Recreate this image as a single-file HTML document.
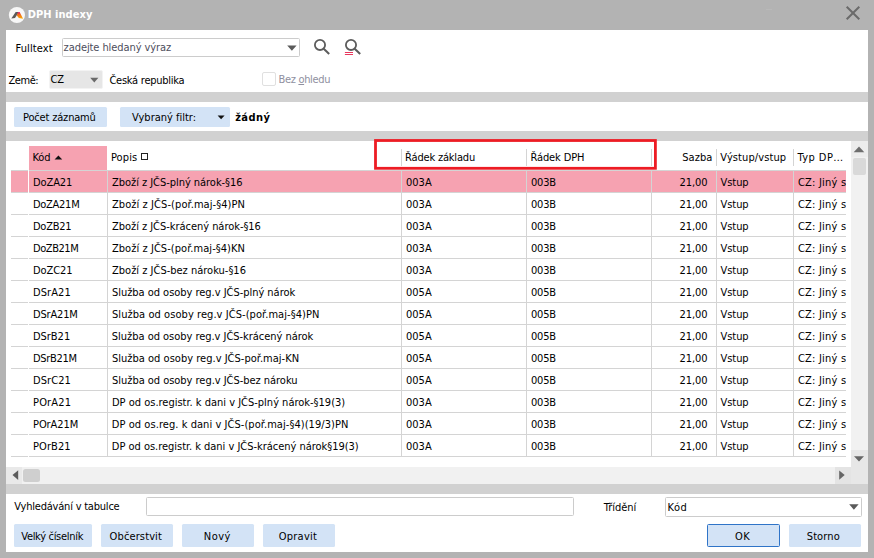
<!DOCTYPE html><html lang="cs"><head><meta charset="utf-8"><title>DPH indexy</title><style>
html,body{margin:0;padding:0}
body{width:874px;height:558px;overflow:hidden;background:#b3b3b3;position:relative;font-family:"DejaVu Sans Condensed", "Liberation Sans", sans-serif;font-size:11px;color:#000}
div,span,svg{position:absolute;box-sizing:border-box}
.t{white-space:nowrap;line-height:14px;height:14px}
.t u{position:static}
.b{font-weight:bold}
.w{color:#fff}
.ph{color:#4d4d5c}
.dis{color:#8f90a0}
.panel{left:6px;top:30px;width:862px;height:522px;background:#fff}
.sep{left:6px;width:862px;background:#d1d1d1}
.btn{background:#d3e3f6;border-radius:1.5px}
.inp{background:#fff;border:1px solid #cccccc;border-radius:1.5px}
.pink{background:#f6a2b1}
.hl{background:#d4d4d4;height:1px}
.vl{background:#d4d4d4;width:1px}
.clip{overflow:hidden}
</style></head><body>
<svg style="left:8px;top:6px" width="18" height="18" viewBox="0 0 18 18"><defs><linearGradient id="g" x1="0" y1="0" x2="0" y2="1"><stop offset="0" stop-color="#e5007d"/><stop offset="0.35" stop-color="#f0641e"/><stop offset="1" stop-color="#f9b000"/></linearGradient></defs><circle cx="8.9" cy="9" r="8.1" fill="#f7f7f7"/><path d="M3.3 12.5 L7.7 6.1 L10.9 6.1 L7 12 Z" fill="#5a5a5a"/><path d="M10 6.2 L11.6 5.9 L15.1 12.7 L10.8 12 L8.7 9.3 Z" fill="url(#g)"/></svg>
<span id="title" class="t b w" style="left:27.70px;top:7.50px;letter-spacing:0.050px">DPH indexy</span>
<svg style="left:844px;top:4px" width="18" height="18" viewBox="0 0 18 18"><path d="M2.7 2.7 L15.3 15.3 M15.3 2.7 L2.7 15.3" stroke="#6a6a6a" stroke-width="2" fill="none"/></svg>
<div class="panel"></div>
<div style="left:766px;top:9px;width:6px;height:1px;background:#b9b9b9"></div>
<span id="fulltext" class="t" style="left:15.50px;top:41.50px;letter-spacing:0.099px">Fulltext</span>
<div class="inp" style="left:62px;top:38px;width:238px;height:19px"></div>
<span id="ph" class="t ph" style="left:63.62px;top:40.50px;letter-spacing:-0.085px">zadejte hledaný výraz</span>
<svg style="left:287px;top:45px" width="11" height="7" viewBox="0 0 11 7"><path d="M0.2 0.4 L9.6 0.4 L4.9 5.8 Z" fill="#5a5a5a"/></svg>
<svg style="left:312px;top:37px" width="20" height="20" viewBox="0 0 20 20"><circle cx="8" cy="7.9" r="5.1" stroke="#5c5c5c" stroke-width="1.8" fill="none"/><path d="M11.7 11.7 L17.2 17" stroke="#5c5c5c" stroke-width="2" fill="none"/></svg>
<svg style="left:343px;top:37px" width="20" height="20" viewBox="0 0 20 20"><circle cx="8" cy="7.9" r="5.1" stroke="#5c5c5c" stroke-width="1.8" fill="none"/><path d="M11.7 11.7 L17.2 17" stroke="#5c5c5c" stroke-width="2" fill="none"/><path d="M1.9 15.5 H10 M1.9 17.5 H10" stroke="#e8365c" stroke-width="1.2" fill="none"/></svg>
<span id="zeme" class="t" style="left:8.52px;top:73.50px;letter-spacing:-0.438px">Země:</span>
<div style="left:49px;top:70px;width:54px;height:19px;background:#e6e6e6;border:1px solid #f3f3f3;border-radius:2px"></div>
<span id="cz" class="t" style="left:50.50px;top:72.50px;letter-spacing:-0.162px">CZ</span>
<svg style="left:89px;top:77px" width="11" height="7" viewBox="0 0 11 7"><path d="M1.2 0.8 L9.4 0.8 L5.3 5.6 Z" fill="#6a6a6a"/></svg>
<span id="ceska" class="t" style="left:109.43px;top:73.50px;letter-spacing:-0.252px">Česká republika</span>
<div style="left:262px;top:72px;width:14px;height:14px;border:1px solid #e0e0e0;border-radius:2px;background:#fff"></div>
<span id="bez" class="t dis" style="left:278.50px;top:72.50px;letter-spacing:-0.333px">Bez <u>o</u>hledu</span>
<div class="sep" style="top:92px;height:10px"></div>
<div class="btn" style="left:14px;top:107px;width:93px;height:20px"></div>
<span id="pocet" class="t" style="left:23.05px;top:110.50px;letter-spacing:-0.172px">Počet záznamů</span>
<div class="btn" style="left:120px;top:107px;width:110px;height:20px"></div>
<span id="vyb" class="t" style="left:132.06px;top:110.50px;letter-spacing:-0.009px">Vybraný filtr:</span>
<svg style="left:217px;top:115px" width="8" height="5" viewBox="0 0 8 5"><path d="M0.6 0.4 L7.6 0.4 L4.1 4.3 Z" fill="#111"/></svg>
<span id="zadny" class="t b" style="left:235.14px;top:110.50px;letter-spacing:0.450px">žádný</span>
<div class="sep" style="top:131px;height:10px"></div>
<div class="pink" style="left:29px;top:146px;width:78px;height:24px"></div>
<span id="h_kod" class="t" style="left:32.44px;top:150.50px;letter-spacing:-0.120px">Kód</span>
<svg style="left:54px;top:155px" width="9" height="5" viewBox="0 0 9 5"><path d="M0.6 4.6 L8.2 4.6 L4.4 0.4 Z" fill="#111"/></svg>
<span id="h_popis" class="t" style="left:110.88px;top:150.50px;letter-spacing:0.129px">Popis</span>
<div style="left:141px;top:153px;width:7px;height:7px;border:1px solid #222"></div>
<div class="vl" style="left:401px;top:149px;height:17px"></div>
<div class="vl" style="left:526px;top:149px;height:17px"></div>
<div class="vl" style="left:651px;top:149px;height:17px"></div>
<div class="vl" style="left:716px;top:149px;height:17px"></div>
<div class="vl" style="left:793px;top:149px;height:17px"></div>
<span id="h_rz" class="t" style="left:405.05px;top:150.50px;letter-spacing:-0.179px">Řádek základu</span>
<span id="h_rd" class="t" style="left:530.50px;top:150.50px;letter-spacing:-0.125px">Řádek DPH</span>
<span id="h_sazba" class="t" style="left:682.26px;top:150.50px;letter-spacing:0.068px">Sazba</span>
<span id="h_vv" class="t" style="left:720.37px;top:150.50px;letter-spacing:0.089px">Výstup/vstup</span>
<span id="h_typ" class="t" style="left:797.42px;top:150.50px;letter-spacing:0.450px">Typ DP…</span>
<div class="pink" style="left:11px;top:171px;width:17px;height:21px"></div>
<div class="pink" style="left:29px;top:171px;width:817px;height:21px"></div>
<div class="hl" style="left:11px;top:170px;width:835px"></div>
<div class="hl" style="left:11px;top:192px;width:835px"></div>
<div class="hl" style="left:11px;top:214px;width:835px"></div>
<div class="hl" style="left:11px;top:236px;width:835px"></div>
<div class="hl" style="left:11px;top:258px;width:835px"></div>
<div class="hl" style="left:11px;top:280px;width:835px"></div>
<div class="hl" style="left:11px;top:302px;width:835px"></div>
<div class="hl" style="left:11px;top:324px;width:835px"></div>
<div class="hl" style="left:11px;top:346px;width:835px"></div>
<div class="hl" style="left:11px;top:368px;width:835px"></div>
<div class="hl" style="left:11px;top:390px;width:835px"></div>
<div class="hl" style="left:11px;top:412px;width:835px"></div>
<div class="hl" style="left:11px;top:434px;width:835px"></div>
<div class="hl" style="left:11px;top:456px;width:835px"></div>
<div style="left:28px;top:170px;width:1px;height:287px;background:#fff"></div>
<div class="vl" style="left:107px;top:170px;height:287px"></div>
<div class="vl" style="left:401px;top:170px;height:287px"></div>
<div class="vl" style="left:526px;top:170px;height:287px"></div>
<div class="vl" style="left:651px;top:170px;height:287px"></div>
<div class="vl" style="left:716px;top:170px;height:287px"></div>
<div class="vl" style="left:793px;top:170px;height:287px"></div>
<div class="clip" style="left:0;top:0;width:846px;height:470px">
<span id="r0k" class="t" style="left:33.01px;top:175.50px;letter-spacing:-0.109px">DoZA21</span><span id="r0p" class="t" style="left:111.99px;top:175.50px;letter-spacing:-0.040px">Zboží z JČS-plný nárok-§16</span><span id="r0a" class="t" style="left:405.90px;top:175.50px;letter-spacing:0.065px">003A</span><span id="r0b" class="t" style="left:530.93px;top:175.50px;letter-spacing:-0.193px">003B</span><span id="r0s" class="t" style="left:679.57px;top:175.50px;letter-spacing:-0.097px">21,00</span><span id="r0v" class="t" style="left:720.59px;top:175.50px;letter-spacing:-0.079px">Vstup</span><span id="r0t" class="t" style="left:797.90px;top:175.50px;letter-spacing:0.222px">CZ: Jiný s</span>
<span id="r1k" class="t" style="left:33.02px;top:197.50px;letter-spacing:-0.283px">DoZA21M</span><span id="r1p" class="t" style="left:111.94px;top:197.50px;letter-spacing:0.078px">Zboží z JČS-(poř.maj-§4)PN</span><span id="r1a" class="t" style="left:405.90px;top:197.50px;letter-spacing:0.065px">003A</span><span id="r1b" class="t" style="left:530.93px;top:197.50px;letter-spacing:-0.193px">003B</span><span id="r1s" class="t" style="left:679.57px;top:197.50px;letter-spacing:-0.097px">21,00</span><span id="r1v" class="t" style="left:720.59px;top:197.50px;letter-spacing:-0.079px">Vstup</span><span id="r1t" class="t" style="left:797.90px;top:197.50px;letter-spacing:0.222px">CZ: Jiný s</span>
<span id="r2k" class="t" style="left:33.00px;top:219.50px;letter-spacing:-0.248px">DoZB21</span><span id="r2p" class="t" style="left:111.98px;top:219.50px;letter-spacing:-0.036px">Zboží z JČS-krácený nárok-§16</span><span id="r2a" class="t" style="left:405.90px;top:219.50px;letter-spacing:0.065px">003A</span><span id="r2b" class="t" style="left:530.93px;top:219.50px;letter-spacing:-0.193px">003B</span><span id="r2s" class="t" style="left:679.57px;top:219.50px;letter-spacing:-0.097px">21,00</span><span id="r2v" class="t" style="left:720.59px;top:219.50px;letter-spacing:-0.079px">Vstup</span><span id="r2t" class="t" style="left:797.90px;top:219.50px;letter-spacing:0.222px">CZ: Jiný s</span>
<span id="r3k" class="t" style="left:33.01px;top:241.50px;letter-spacing:-0.435px">DoZB21M</span><span id="r3p" class="t" style="left:111.93px;top:241.50px;letter-spacing:0.057px">Zboží z JČS-(poř.maj-§4)KN</span><span id="r3a" class="t" style="left:405.90px;top:241.50px;letter-spacing:0.065px">003A</span><span id="r3b" class="t" style="left:530.93px;top:241.50px;letter-spacing:-0.193px">003B</span><span id="r3s" class="t" style="left:679.57px;top:241.50px;letter-spacing:-0.097px">21,00</span><span id="r3v" class="t" style="left:720.59px;top:241.50px;letter-spacing:-0.079px">Vstup</span><span id="r3t" class="t" style="left:797.90px;top:241.50px;letter-spacing:0.222px">CZ: Jiný s</span>
<span id="r4k" class="t" style="left:33.01px;top:263.50px;letter-spacing:-0.106px">DoZC21</span><span id="r4p" class="t" style="left:112.02px;top:263.50px">Zboží z JČS-bez nároku-§16</span><span id="r4a" class="t" style="left:405.90px;top:263.50px;letter-spacing:0.065px">003A</span><span id="r4b" class="t" style="left:530.93px;top:263.50px;letter-spacing:-0.193px">003B</span><span id="r4s" class="t" style="left:679.57px;top:263.50px;letter-spacing:-0.097px">21,00</span><span id="r4v" class="t" style="left:720.59px;top:263.50px;letter-spacing:-0.079px">Vstup</span><span id="r4t" class="t" style="left:797.90px;top:263.50px;letter-spacing:0.222px">CZ: Jiný s</span>
<span id="r5k" class="t" style="left:33.02px;top:285.50px;letter-spacing:0.086px">DSrA21</span><span id="r5p" class="t" style="left:111.96px;top:285.50px;letter-spacing:-0.030px">Služba od osoby reg.v JČS-plný nárok</span><span id="r5a" class="t" style="left:405.92px;top:285.50px;letter-spacing:0.058px">005A</span><span id="r5b" class="t" style="left:530.93px;top:285.50px;letter-spacing:-0.193px">005B</span><span id="r5s" class="t" style="left:679.57px;top:285.50px;letter-spacing:-0.097px">21,00</span><span id="r5v" class="t" style="left:720.59px;top:285.50px;letter-spacing:-0.079px">Vstup</span><span id="r5t" class="t" style="left:797.90px;top:285.50px;letter-spacing:0.222px">CZ: Jiný s</span>
<span id="r6k" class="t" style="left:33.01px;top:307.50px;letter-spacing:-0.176px">DSrA21M</span><span id="r6p" class="t" style="left:112.00px;top:307.50px;letter-spacing:0.063px">Služba od osoby reg.v JČS-(poř.maj-§4)PN</span><span id="r6a" class="t" style="left:405.92px;top:307.50px;letter-spacing:0.058px">005A</span><span id="r6b" class="t" style="left:530.93px;top:307.50px;letter-spacing:-0.193px">005B</span><span id="r6s" class="t" style="left:679.57px;top:307.50px;letter-spacing:-0.097px">21,00</span><span id="r6v" class="t" style="left:720.59px;top:307.50px;letter-spacing:-0.079px">Vstup</span><span id="r6t" class="t" style="left:797.90px;top:307.50px;letter-spacing:0.222px">CZ: Jiný s</span>
<span id="r7k" class="t" style="left:33.01px;top:329.50px;letter-spacing:-0.036px">DSrB21</span><span id="r7p" class="t" style="left:111.85px;top:329.50px;letter-spacing:-0.030px">Služba od osoby reg.v JČS-krácený nárok</span><span id="r7a" class="t" style="left:405.92px;top:329.50px;letter-spacing:0.058px">005A</span><span id="r7b" class="t" style="left:530.93px;top:329.50px;letter-spacing:-0.193px">005B</span><span id="r7s" class="t" style="left:679.57px;top:329.50px;letter-spacing:-0.097px">21,00</span><span id="r7v" class="t" style="left:720.59px;top:329.50px;letter-spacing:-0.079px">Vstup</span><span id="r7t" class="t" style="left:797.90px;top:329.50px;letter-spacing:0.222px">CZ: Jiný s</span>
<span id="r8k" class="t" style="left:33.01px;top:351.50px;letter-spacing:-0.297px">DSrB21M</span><span id="r8p" class="t" style="left:111.92px;top:351.50px;letter-spacing:0.019px">Služba od osoby reg.v JČS-poř.maj-KN</span><span id="r8a" class="t" style="left:405.92px;top:351.50px;letter-spacing:0.058px">005A</span><span id="r8b" class="t" style="left:530.93px;top:351.50px;letter-spacing:-0.193px">005B</span><span id="r8s" class="t" style="left:679.57px;top:351.50px;letter-spacing:-0.097px">21,00</span><span id="r8v" class="t" style="left:720.59px;top:351.50px;letter-spacing:-0.079px">Vstup</span><span id="r8t" class="t" style="left:797.90px;top:351.50px;letter-spacing:0.222px">CZ: Jiný s</span>
<span id="r9k" class="t" style="left:33.02px;top:373.50px;letter-spacing:0.065px">DSrC21</span><span id="r9p" class="t" style="left:112.05px;top:373.50px;letter-spacing:-0.033px">Služba od osoby reg.v JČS-bez nároku</span><span id="r9a" class="t" style="left:405.92px;top:373.50px;letter-spacing:0.058px">005A</span><span id="r9b" class="t" style="left:530.93px;top:373.50px;letter-spacing:-0.193px">005B</span><span id="r9s" class="t" style="left:679.57px;top:373.50px;letter-spacing:-0.097px">21,00</span><span id="r9v" class="t" style="left:720.59px;top:373.50px;letter-spacing:-0.079px">Vstup</span><span id="r9t" class="t" style="left:797.90px;top:373.50px;letter-spacing:0.222px">CZ: Jiný s</span>
<span id="r10k" class="t" style="left:33.00px;top:395.50px;letter-spacing:0.166px">POrA21</span><span id="r10p" class="t" style="left:112.01px;top:395.50px;letter-spacing:-0.004px">DP od os.registr. k dani v JČS-plný nárok-§19(3)</span><span id="r10a" class="t" style="left:405.90px;top:395.50px;letter-spacing:0.065px">003A</span><span id="r10b" class="t" style="left:530.93px;top:395.50px;letter-spacing:-0.193px">003B</span><span id="r10s" class="t" style="left:679.57px;top:395.50px;letter-spacing:-0.097px">21,00</span><span id="r10v" class="t" style="left:720.59px;top:395.50px;letter-spacing:-0.079px">Vstup</span><span id="r10t" class="t" style="left:797.90px;top:395.50px;letter-spacing:0.222px">CZ: Jiný s</span>
<span id="r11k" class="t" style="left:33.00px;top:417.50px;letter-spacing:-0.085px">POrA21M</span><span id="r11p" class="t" style="left:111.84px;top:417.50px;letter-spacing:0.056px">DP od os.reg. k dani v JČS-(poř.maj-§4)(19/3)PN</span><span id="r11a" class="t" style="left:405.90px;top:417.50px;letter-spacing:0.065px">003A</span><span id="r11b" class="t" style="left:530.93px;top:417.50px;letter-spacing:-0.193px">003B</span><span id="r11s" class="t" style="left:679.57px;top:417.50px;letter-spacing:-0.097px">21,00</span><span id="r11v" class="t" style="left:720.59px;top:417.50px;letter-spacing:-0.079px">Vstup</span><span id="r11t" class="t" style="left:797.90px;top:417.50px;letter-spacing:0.222px">CZ: Jiný s</span>
<span id="r12k" class="t" style="left:33.00px;top:439.50px;letter-spacing:0.076px">POrB21</span><span id="r12p" class="t" style="left:111.84px;top:439.50px;letter-spacing:-0.026px">DP od os.registr. k dani v JČS-krácený nárok§19(3)</span><span id="r12a" class="t" style="left:405.90px;top:439.50px;letter-spacing:0.065px">003A</span><span id="r12b" class="t" style="left:530.93px;top:439.50px;letter-spacing:-0.193px">003B</span><span id="r12s" class="t" style="left:679.57px;top:439.50px;letter-spacing:-0.097px">21,00</span><span id="r12v" class="t" style="left:720.59px;top:439.50px;letter-spacing:-0.079px">Vstup</span><span id="r12t" class="t" style="left:797.90px;top:439.50px;letter-spacing:0.222px">CZ: Jiný s</span>
</div>
<svg style="left:370px;top:136px" width="292" height="38" viewBox="0 0 292 38"><rect x="5.5" y="4.5" width="279.9" height="27.8" fill="none" stroke="#ed1c24" stroke-width="2.8"/></svg>
<div style="left:851px;top:141px;width:17px;height:326px;background:#f1f1f1"></div>
<div style="left:851px;top:141px;width:17px;height:16px;background:#ececec"></div>
<div style="left:851px;top:450px;width:17px;height:16.5px;background:#e7e7e7"></div>
<svg style="left:853px;top:146px" width="12" height="7" viewBox="0 0 12 7"><path d="M0.7 6.3 L11.3 6.3 L6 0.4 Z" fill="#6e6e6e"/></svg>
<div style="left:853px;top:158px;width:13px;height:17px;background:#d9d9d9;border-radius:2px"></div>
<svg style="left:853px;top:456px" width="12" height="7" viewBox="0 0 12 7"><path d="M1 0.2 L11 0.2 L6 5.5 Z" fill="#666"/></svg>
<div style="left:6px;top:467px;width:846px;height:17px;background:#f1f1f1"></div>
<div style="left:6px;top:467px;width:16px;height:17px;background:#e9e9e9"></div>
<div style="left:834.5px;top:467px;width:16.5px;height:17px;background:#e4e4e4"></div>
<div style="left:851px;top:467px;width:17px;height:17px;background:#e7e7e7"></div>
<svg style="left:12px;top:470px" width="7" height="11" viewBox="0 0 7 11"><path d="M6.2 0.2 L6.2 10 L0.5 5.1 Z" fill="#5c5c5c"/></svg>
<div style="left:23px;top:469px;width:17px;height:13px;background:#cfcfcf;border-radius:2.5px"></div>
<svg style="left:839px;top:470px" width="7" height="11" viewBox="0 0 7 11"><path d="M0.2 0.4 L0.2 9.8 L5.7 5.1 Z" fill="#666"/></svg>
<div class="sep" style="top:484px;height:10px"></div>
<span id="vyhl" class="t" style="left:14.31px;top:499.50px;letter-spacing:-0.212px">Vyhledávání v tabulce</span>
<div class="inp" style="left:146px;top:497px;width:428px;height:19px"></div>
<span id="trid" class="t" style="left:603.77px;top:500.50px;letter-spacing:-0.021px">Třídění</span>
<div class="inp" style="left:665px;top:497px;width:197px;height:20px"></div>
<span id="kod2" class="t" style="left:667.50px;top:500.50px;letter-spacing:0.450px">Kód</span>
<svg style="left:849px;top:504px" width="11" height="7" viewBox="0 0 11 7"><path d="M0.2 0.3 L9.6 0.3 L4.9 5.7 Z" fill="#5a5a5a"/></svg>
<div class="btn" style="left:14px;top:524px;width:78px;height:23px"></div>
<span id="b1" class="t" style="left:21.28px;top:529.50px;letter-spacing:-0.303px">Velký číselník</span>
<div class="btn" style="left:101px;top:524px;width:72px;height:23px"></div>
<span id="b2" class="t" style="left:109.61px;top:529.50px;letter-spacing:0.119px">Občerstvit</span>
<div class="btn" style="left:182px;top:524px;width:72px;height:23px"></div>
<span id="b3" class="t" style="left:203.82px;top:529.50px;letter-spacing:0.450px">Nový</span>
<div class="btn" style="left:263px;top:524px;width:72px;height:23px"></div>
<span id="b4" class="t" style="left:278.79px;top:529.50px;letter-spacing:0.223px">Opravit</span>
<div class="btn" style="left:707px;top:524px;width:73px;height:23px;border:1px solid #2f74c8"></div>
<span id="ok" class="t" style="left:734.91px;top:529.50px;letter-spacing:0.450px">OK</span>
<div class="btn" style="left:789px;top:524px;width:72px;height:23px"></div>
<span id="storno" class="t" style="left:806.75px;top:529.50px;letter-spacing:0.105px">Storno</span>
</body></html>
